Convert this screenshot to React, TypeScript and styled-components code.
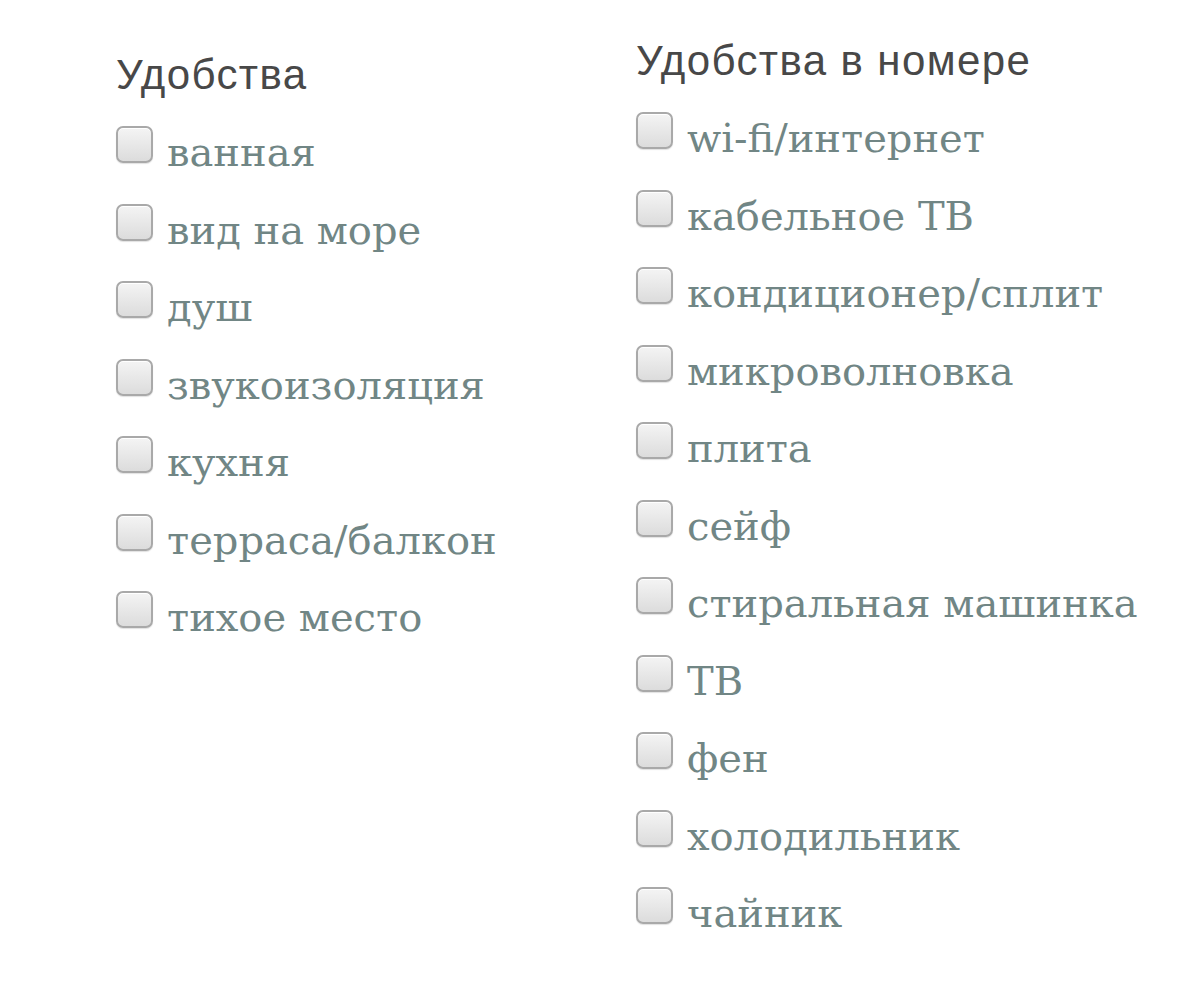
import React from "react";
import styled, { createGlobalStyle } from "styled-components";

const Global = createGlobalStyle`
  html, body { margin: 0; padding: 0; background: #ffffff; }
  body { width: 1200px; height: 1008px; overflow: hidden; }
`;

const Page = styled.div`
  display: flex;
  align-items: flex-start;
  padding-left: 116px;
`;

const Column = styled.section<{ $top: number; $width?: number }>`
  display: flex;
  flex-direction: column;
  padding-top: ${(p) => p.$top}px;
  width: ${(p) => (p.$width ? `${p.$width}px` : "auto")};
`;

const Heading = styled.h3`
  margin: 0 0 28px 0;
  font-family: "Liberation Sans", Arial, sans-serif;
  font-weight: 400;
  font-size: 42px;
  letter-spacing: 1.4px;
  line-height: 46px;
  color: #484848;
`;

const List = styled.div`
  display: flex;
  flex-direction: column;
`;

const Row = styled.label`
  display: flex;
  align-items: flex-start;
  gap: 14px;
  height: 77.5px;
`;

const Box = styled.span`
  flex: none;
  box-sizing: border-box;
  width: 37px;
  height: 37px;
  border: 2px solid #a9a9a9;
  border-radius: 7px;
  background: linear-gradient(#f4f4f4, #dcdcdc);
  box-shadow: inset 0 1px 0 #ffffff, 0 1px 1px rgba(0, 0, 0, 0.12);
`;

const Text = styled.span`
  margin-top: 8px;
  font-family: "DejaVu Serif", "Liberation Serif", serif;
  font-size: 40px;
  line-height: 36px;
  color: #718685;
  white-space: nowrap;
`;

const left = [
  "ванная",
  "вид на море",
  "душ",
  "звукоизоляция",
  "кухня",
  "терраса/балкон",
  "тихое место",
];

const right = [
  "wi-fi/интернет",
  "кабельное ТВ",
  "кондиционер/сплит",
  "микроволновка",
  "плита",
  "сейф",
  "стиральная машинка",
  "ТВ",
  "фен",
  "холодильник",
  "чайник",
];

function Group({ title, items, top, width }: { title: string; items: string[]; top: number; width?: number }) {
  return (
    <Column $top={top} $width={width}>
      <Heading>{title}</Heading>
      <List>
        {items.map((it) => (
          <Row key={it}>
            <Box />
            <Text>{it}</Text>
          </Row>
        ))}
      </List>
    </Column>
  );
}

export default function App() {
  return (
    <>
      <Global />
      <Page>
        <Group title="Удобства" items={left} top={52} width={520} />
        <Group title="Удобства в номере" items={right} top={38} />
      </Page>
    </>
  );
}
